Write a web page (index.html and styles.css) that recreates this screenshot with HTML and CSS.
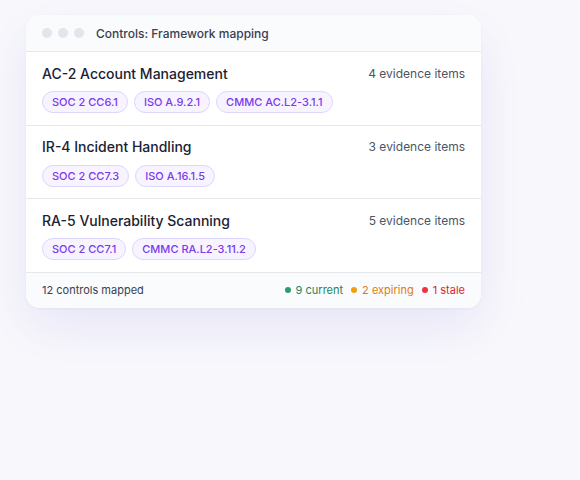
FILE: index.html
```
<!DOCTYPE html>
<html>
<head>
<meta charset="utf-8">
<link rel="stylesheet" href="styles.css">
</head>
<body>
<div class="card">
  <div class="header">
    <div class="dots"><span></span><span></span><span></span></div>
    <div class="title">Controls: Framework mapping</div>
  </div>
  <div class="row">
    <div class="row-top">
      <div class="name">AC-2 Account Management</div>
      <div class="count">4 evidence items</div>
    </div>
    <div class="tags">
      <span class="tag">SOC 2 CC6.1</span>
      <span class="tag">ISO A.9.2.1</span>
      <span class="tag">CMMC AC.L2-3.1.1</span>
    </div>
  </div>
  <div class="row">
    <div class="row-top">
      <div class="name">IR-4 Incident Handling</div>
      <div class="count">3 evidence items</div>
    </div>
    <div class="tags">
      <span class="tag">SOC 2 CC7.3</span>
      <span class="tag">ISO A.16.1.5</span>
    </div>
  </div>
  <div class="row">
    <div class="row-top">
      <div class="name">RA-5 Vulnerability Scanning</div>
      <div class="count">5 evidence items</div>
    </div>
    <div class="tags">
      <span class="tag">SOC 2 CC7.1</span>
      <span class="tag">CMMC RA.L2-3.11.2</span>
    </div>
  </div>
  <div class="footer">
    <div class="summary">12 controls mapped</div>
    <div class="status">
      <span class="st green"><i></i>9 current</span>
      <span class="st orange"><i></i>2 expiring</span>
      <span class="st red"><i></i>1 stale</span>
    </div>
  </div>
</div>
</body>
</html>
```

FILE: styles.css
```
html, body {
  margin: 0;
  padding: 0;
}
body {
  width: 580px;
  height: 480px;
  background: #f8f8fc;
  font-family: Inter, "Noto Sans", sans-serif;
  padding: 15px 0 0 26px;
  box-sizing: border-box;
}
.card {
  width: 455px;
  background: #ffffff;
  border-radius: 14px;
  box-shadow: 0 20px 50px rgba(100, 80, 210, 0.11), 0 1px 3px rgba(30, 30, 60, 0.04);
  overflow: hidden;
}
.header {
  height: 36px;
  display: flex;
  align-items: center;
  padding: 0 16px;
  background: #fafbfd;
  border-bottom: 1px solid #e5e7eb;
  gap: 12px;
}
.dots {
  display: flex;
  gap: 6px;
}
.dots span {
  width: 10px;
  height: 10px;
  border-radius: 50%;
  background: #e2e5ec;
}
.title {
  font-size: 12px;
  color: #374151;
  font-weight: 500;
}
.row {
  padding: 11px 16px 11.5px 16px;
  border-bottom: 1px solid #e5e7eb;
  display: flex;
  flex-direction: column;
  gap: 8px;
}
.row-top {
  display: flex;
  justify-content: space-between;
  align-items: center;
  height: 20px;
}
.name {
  font-size: 14px;
  font-weight: 500;
  color: #1a2233;
}
.count {
  font-size: 12px;
  color: #4b5563;
}
.tags {
  display: flex;
  gap: 6px;
}
.tag {
  height: 20px;
  line-height: 20px;
  padding: 0 9px;
  border-radius: 999px;
  background: #f7f3ff;
  border: 1px solid #ddd6fe;
  color: #7c3aed;
  font-size: 11px;
  font-weight: 500;
}
.footer {
  height: 35px;
  background: #fafbfd;
  display: flex;
  align-items: center;
  justify-content: space-between;
  padding: 0 16px;
}
.summary {
  font-size: 11px;
  color: #374151;
  font-weight: 400;
}
.status {
  display: flex;
  gap: 8px;
}
.st {
  font-size: 11px;
  font-weight: 400;
  display: flex;
  align-items: center;
  gap: 5px;
}
.st i {
  width: 6px;
  height: 6px;
  border-radius: 50%;
}
.green { color: #23845f; }
.green i { background: #2f9a70; }
.orange { color: #e07c0a; }
.orange i { background: #f59e0b; }
.red { color: #dc1f2e; }
.red i { background: #ef3340; }
```
